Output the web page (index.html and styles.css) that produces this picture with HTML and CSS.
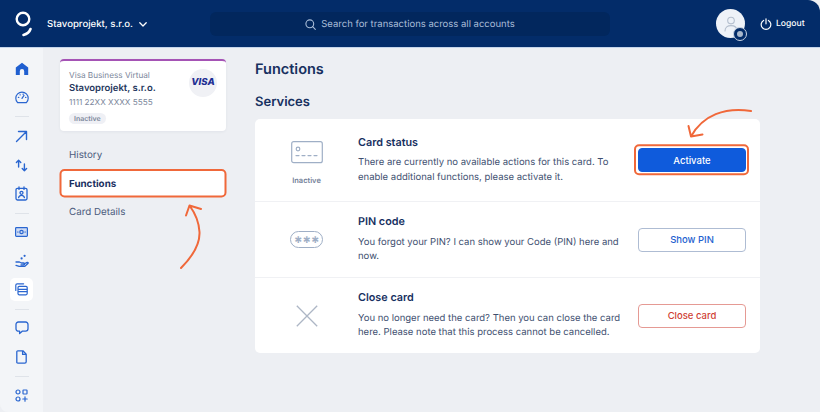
FILE: index.html
```html
<!DOCTYPE html>
<html lang="en">
<head>
  <meta charset="UTF-8">
  <title>Functions</title>
  <link rel="stylesheet" href="styles.css">
</head>
<body>

  <header class="topbar">
    <svg class="logo" width="18" height="26" viewBox="0 0 18 26" fill="none" stroke="#fff" stroke-width="2.4" stroke-linecap="round">
      <circle cx="8" cy="8" r="6.300"/>
      <path d="M15.500 18c-1 3-3.500 5-7 6" stroke-width="2.600"/>
    </svg>
    <div class="company">
      <span>Stavoprojekt, s.r.o.</span>
      <svg width="8" height="5" viewBox="0 0 8 5" fill="none" stroke="#fff" stroke-width="1.300" stroke-linecap="round" stroke-linejoin="round"><path d="M.8.800L4 4l3.200-3.200"/></svg>
    </div>
    <div class="search">
      <svg width="11" height="11" viewBox="0 0 11 11" fill="none" stroke="#a9bdd8" stroke-width="1.100" stroke-linecap="round"><circle cx="4.800" cy="4.800" r="3.900"/><path d="M7.700 7.700l2.600 2.600"/></svg>
      <span>Search for transactions across all accounts</span>
    </div>
    <div class="avatar">
      <svg width="14" height="16" viewBox="0 0 14 16" fill="none" stroke="#b4bfce" stroke-width="1.100"><circle cx="7" cy="4.600" r="3.300"/><path d="M1 15c0-3.600 2.600-5.400 6-5.400s6 1.800 6 5.400" stroke-linecap="round"/></svg>
      <div class="avatar-badge"><i></i></div>
    </div>
    <div class="logout">
      <svg width="12" height="12" viewBox="0 0 12 12" fill="none" stroke="#fff" stroke-width="1.200" stroke-linecap="round"><path d="M3.600 2.400a4.800 4.800 0 1 0 4.800 0M6 .8v5"/></svg>
      <span>Logout</span>
    </div>
  </header>

  <div class="layout">
    <nav class="rail">
      <a class="rail-item">
        <svg width="14" height="14" viewBox="0 0 14 14" fill="#1f5fd0"><path d="M7 .8L.8 5.600V13h4V9.200a2.200 2.200 0 0 1 4.400 0V13h4V5.600z"/></svg>
      </a>
      <a class="rail-item">
        <svg width="14" height="13" viewBox="0 0 14 13" fill="none" stroke="#2a66d0" stroke-width="1.200" stroke-linecap="round"><path d="M2.600 11.600a6.200 6.200 0 1 1 8.800 0z"/><path d="M7 7.400l2-3M3.400 6.400h.4M5 3.800h.3M8 3.200h.3M10.600 6.400h.3"/></svg>
      </a>
      <hr class="rail-line">
      <a class="rail-item">
        <svg width="13" height="13" viewBox="0 0 13 13" fill="none" stroke="#2a66d0" stroke-width="1.400" stroke-linecap="round" stroke-linejoin="round"><path d="M1.500 11.500l10-10M3.500 1.500h8v8"/></svg>
      </a>
      <a class="rail-item">
        <svg width="13" height="13" viewBox="0 0 13 13" fill="none" stroke="#2a66d0" stroke-width="1.400" stroke-linecap="round" stroke-linejoin="round"><path d="M3.600 8V1.200M1.400 3.400l2.200-2.200 2.200 2.200M9.400 5v6.800M7.200 9.600l2.200 2.200 2.200-2.200"/></svg>
      </a>
      <a class="rail-item">
        <svg width="13" height="15" viewBox="0 0 13 15" fill="none" stroke="#2a66d0" stroke-width="1.300" stroke-linecap="round"><rect x="1" y="2.400" width="11" height="11.600" rx="1.400"/><path d="M4 .8v2.600M9 .8v2.600M3.600 11.600c.4-1.600 1.500-2.200 2.900-2.200s2.500.6 2.900 2.200"/><circle cx="6.500" cy="6.800" r="1.500"/></svg>
      </a>
      <hr class="rail-line">
      <a class="rail-item">
        <svg width="13" height="10" viewBox="0 0 13 10" fill="none" stroke="#2a66d0" stroke-width="1.200"><rect x=".6" y=".6" width="11.800" height="8.800" rx=".8" fill="#cfdcf4"/><circle cx="6.500" cy="5" r="1.700"/><path d="M2.600 5h.5M9.900 5h.5" stroke-linecap="round"/></svg>
      </a>
      <a class="rail-item">
        <svg width="14" height="14" viewBox="0 0 14 14" fill="none" stroke="#2a66d0" stroke-width="1.300" stroke-linecap="round" stroke-linejoin="round"><circle cx="9.600" cy="1.800" r="1.100" fill="#2a66d0" stroke="none"/><circle cx="6.600" cy="4.400" r="1.100" fill="#2a66d0" stroke="none"/><path d="M1 8h3.400l2 1h2.200a1 1 0 0 1 0 2H6"/><path d="M8.800 10l3.400-1.600c.8-.3 1.300.6.700 1.100L9.600 12.400H4.200L1 11.400"/></svg>
      </a>
      <a class="rail-item is-active">
        <svg width="13" height="13" viewBox="0 0 13 13" fill="none" stroke="#2a66d0" stroke-width="1.200"><path d="M.8 7.400V2.200A1.400 1.400 0 0 1 2.200.8h6.400" stroke-linecap="round"/><rect x="3" y="3.400" width="9.200" height="8.400" rx="1.200" fill="#fff"/><path d="M3 6.400h9.200M3 8.600h9.200"/></svg>
      </a>
      <hr class="rail-line">
      <a class="rail-item">
        <svg width="14" height="14" viewBox="0 0 14 14" fill="none" stroke="#2a66d0" stroke-width="1.300" stroke-linejoin="round"><path d="M3.400 1h7.200A2.400 2.400 0 0 1 13 3.400v4.400a2.400 2.400 0 0 1-2.400 2.400H7.200L4.600 12.600V10.200H3.400A2.400 2.400 0 0 1 1 7.800V3.400A2.400 2.400 0 0 1 3.400 1z"/></svg>
      </a>
      <a class="rail-item">
        <svg width="11" height="14" viewBox="0 0 11 14" fill="none" stroke="#2a66d0" stroke-width="1.300" stroke-linejoin="round"><path d="M1.800.8h5.100l3.300 3.400v7.600a1.400 1.400 0 0 1-1.400 1.400H1.800A1 1 0 0 1 .8 12.200V1.800A1 1 0 0 1 1.800.8z"/><path d="M6.600 1v3.400h3.400"/></svg>
      </a>
      <hr class="rail-line">
      <a class="rail-item">
        <svg width="13" height="13" viewBox="0 0 13 13" fill="none" stroke="#2a66d0" stroke-width="1.200" stroke-linecap="round"><circle cx="3" cy="3" r="2"/><rect x="8" y="1" width="4" height="4" rx=".5"/><circle cx="3" cy="10" r="2"/><path d="M10 7.800v4.400M7.800 10h4.400"/></svg>
      </a>
    </nav>

    <aside class="side">
      <div class="bank-card">
        <div class="bank-info">
          <div class="bank-type">Visa Business Virtual</div>
          <div class="bank-name">Stavoprojekt, s.r.o.</div>
          <div class="bank-type">1111 22XX XXXX 5555</div>
          <span class="tag">Inactive</span>
        </div>
        <div class="visa">VISA</div>
      </div>
      <ul class="side-menu">
        <li>History</li>
        <li class="current">Functions</li>
        <li>Card Details</li>
      </ul>
    </aside>

    <main class="content">
      <h1>Functions</h1>
      <h2>Services</h2>
      <section class="services">
        <div class="service">
          <div class="service-icon has-label">
            <svg width="32" height="23" viewBox="0 0 32 23" fill="none" stroke="#9fafc6" stroke-width="1.200"><rect x=".7" y=".7" width="30.600" height="21" rx="2"/><circle cx="7" cy="8" r="1.800"/><path d="M5 14.600h3M11 14.600h3M17 14.600h3M23 14.600h3" stroke-linecap="round"/></svg>
            <span class="icon-label">Inactive</span>
          </div>
          <div class="service-text">
            <h3>Card status</h3>
            <p>There are currently no available actions for this card. To enable additional functions, please activate it.</p>
          </div>
          <button class="btn btn-primary">Activate</button>
        </div>
        <div class="service">
          <div class="service-icon">
            <div class="pin-pill"><span class="pin-stars">***</span></div>
          </div>
          <div class="service-text">
            <h3>PIN code</h3>
            <p>You forgot your PIN? I can show your Code (PIN) here and now.</p>
          </div>
          <button class="btn btn-outline">Show PIN</button>
        </div>
        <div class="service">
          <div class="service-icon">
            <svg width="22" height="22" viewBox="0 0 22 22" fill="none" stroke="#adb6c5" stroke-width="1.300"><path d="M.8.800l20.400 20.400M21.200.800L.8 21.200"/></svg>
          </div>
          <div class="service-text">
            <h3>Close card</h3>
            <p>You no longer need the card? Then you can close the card here. Please note that this process cannot be cancelled.</p>
          </div>
          <button class="btn btn-danger">Close card</button>
        </div>
      </section>
    </main>
  </div>

  <!-- orange annotations drawn over the page -->
  <svg class="marks" width="820" height="412" viewBox="0 0 820 412" fill="none" stroke="#f0683a" stroke-linecap="round" stroke-linejoin="round" stroke-width="2">
    <rect x="60.500" y="170" width="165" height="26.500" rx="4"/>
    <rect x="635" y="145.300" width="113" height="29" rx="4"/>
    <path d="M181 268C194 255 200 243 199.500 232 199 222 195 213 189.500 205.500M186 215.500L189.500 205.500 201 209"/>
    <path d="M751 111C725 107 703 115 691 136.500M688.500 126L691 136.500 702.500 134.500"/>
  </svg>

</body>
</html>
```

FILE: styles.css
```css
* {
  box-sizing: border-box;
}

body {
  margin: 0;
  width: 820px;
  height: 412px;
  overflow: hidden;
  font-family: 'Inter', sans-serif;
  text-rendering: geometricPrecision;
  background: #edeff3;
  color: #0f2a5c;
  position: relative;
}

.topbar {
  height: 48px;
  background: #032c69;
  border-radius: 0 12px 0 0;
  border-bottom: 1px solid #c4d4ea;
  display: flex;
  align-items: center;
  padding: 1px 17px 0 15px;
  color: #fff;
}

.logo {
  margin-right: 14px;
  flex: none;
}

.company {
  width: 163px;
  display: flex;
  align-items: center;
  gap: 6px;
  font-size: 9.600px;
  font-weight: 500;
  flex: none;
}

.search {
  width: 400px;
  height: 24px;
  background: #02275d;
  border-radius: 6px;
  display: flex;
  align-items: center;
  justify-content: center;
  gap: 5px;
  font-size: 9.500px;
  color: #a9bdd8;
  flex: none;
}

.avatar {
  width: 29px;
  height: 29px;
  margin: -1px 0 0 106px;
  border-radius: 50%;
  background: #eef2f8;
  display: flex;
  align-items: center;
  justify-content: center;
  position: relative;
  flex: none;
}

.avatar-badge {
  position: absolute;
  right: -2px;
  bottom: -3px;
  width: 14px;
  height: 14px;
  border-radius: 50%;
  background: #032c69;
  border: 1px solid #c9d4e4;
  display: flex;
  align-items: center;
  justify-content: center;
}

.avatar-badge i {
  width: 6px;
  height: 6px;
  border-radius: 50%;
  background: #a9b8cc;
}

.logout {
  margin-left: 15px;
  display: flex;
  align-items: center;
  gap: 4px;
  font-size: 8.600px;
  font-weight: 500;
}

.layout {
  display: flex;
  height: 364px;
}

.rail {
  width: 43px;
  background: #f3f5f8;
  border-radius: 0 0 0 8px;
  padding-top: 6.600px;
  display: flex;
  flex-direction: column;
  align-items: center;
  flex: none;
}

.rail-item {
  width: 23px;
  height: 22.750px;
  margin: 3px 0;
  border-radius: 5px;
  display: flex;
  align-items: center;
  justify-content: center;
  flex: none;
}

.rail-item.is-active {
  background: #fff;
}

.rail-line {
  width: 14px;
  margin: 4.400px 0;
  border: none;
  border-top: 1px solid #dfe3e9;
  flex: none;
}

.side {
  width: 183px;
  padding: 11px 0 0 17px;
  flex: none;
}

.bank-card {
  height: 72px;
  background: #fff;
  border-top: 2px solid #a553b5;
  border-radius: 4px;
  padding: 7.500px 9px 0 9px;
  display: flex;
  justify-content: space-between;
  box-shadow: 0 1px 3px rgba(30, 50, 90, 0.06);
}

.bank-type {
  font-size: 8.200px;
  line-height: 13.500px;
  color: #7c879b;
}

.bank-name {
  font-size: 9.500px;
  line-height: 13.500px;
  font-weight: 600;
  color: #24365c;
}

.tag {
  display: block;
  width: fit-content;
  margin-top: 4px;
  padding: 0 5px;
  height: 11px;
  line-height: 11px;
  border-radius: 6px;
  background: #eff0f5;
  color: #7c879b;
  font-size: 7px;
  font-weight: 600;
}

.visa {
  width: 28px;
  height: 28px;
  border-radius: 50%;
  background: #f0f1f5;
  color: #1f2f93;
  font-size: 9.500px;
  font-weight: 800;
  font-style: italic;
  display: flex;
  align-items: center;
  justify-content: center;
}

.side-menu {
  list-style: none;
  margin: 10px 0 0;
  padding: 0;
}

.side-menu li {
  height: 28.500px;
  padding-left: 9px;
  font-size: 9.800px;
  line-height: 30.500px;
  color: #4c5c7d;
}

.side-menu li.current {
  height: 27px;
  margin: 0.750px 0;
  line-height: 29px;
  background: #fff;
  border-radius: 4px;
  color: #1b315f;
  font-weight: 700;
}

.content {
  flex: 1;
  padding: 13px 60px 0 29px;
}

h1 {
  margin: 0;
  height: 18px;
  line-height: 18px;
  font-size: 14.500px;
  font-weight: 600;
  color: #17305f;
}

h2 {
  margin: 14.500px 0 0;
  height: 16px;
  line-height: 16px;
  font-size: 13px;
  font-weight: 600;
  color: #17305f;
}

.services {
  margin-top: 9.500px;
  background: #fff;
  border-radius: 5px;
}

.service {
  display: flex;
  align-items: center;
  height: 76px;
  padding-right: 14px;
  border-top: 1px solid #f0f1f4;
}

.service:first-child {
  height: 82px;
  border-top: none;
}

.service-icon {
  width: 103px;
  display: flex;
  flex-direction: column;
  align-items: center;
  flex: none;
}

.service-icon.has-label {
  padding-top: 5px;
  gap: 12px;
}

.icon-label {
  font-size: 7.500px;
  font-weight: 600;
  color: #75829a;
}

.pin-pill {
  width: 33px;
  height: 17px;
  border: 1.200px solid #9fafc6;
  border-radius: 9px;
  display: flex;
  align-items: center;
  justify-content: center;
}

.pin-stars {
  padding-top: 4px;
  font-size: 16px;
  line-height: 1;
  font-weight: 700;
  letter-spacing: -0.5px;
  color: #9fafc6;
}

.service-text {
  width: 280px;
  padding-top: 1px;
  flex: none;
}

.service-text h3 {
  margin: 0 0 6.500px;
  font-size: 10.800px;
  line-height: 14px;
  font-weight: 600;
  color: #17305f;
}

.service-text p {
  margin: 0;
  font-size: 9.500px;
  line-height: 14.500px;
  color: #3e4f70;
}

.btn {
  width: 108px;
  height: 24px;
  margin-left: auto;
  border-radius: 4px;
  font-family: inherit;
  font-size: 9.500px;
  font-weight: 500;
  background: #fff;
  cursor: pointer;
}

.btn-primary {
  background: #0f5bdc;
  border: 1.300px solid #0f5bdc;
  color: #fff;
}

.btn-outline {
  border: 1.300px solid #aebcd3;
  color: #1f62d0;
}

.btn-danger {
  border: 1.300px solid #e59a94;
  color: #cf3f35;
}

.marks {
  position: absolute;
  top: 0;
  left: 0;
  pointer-events: none;
}
```
